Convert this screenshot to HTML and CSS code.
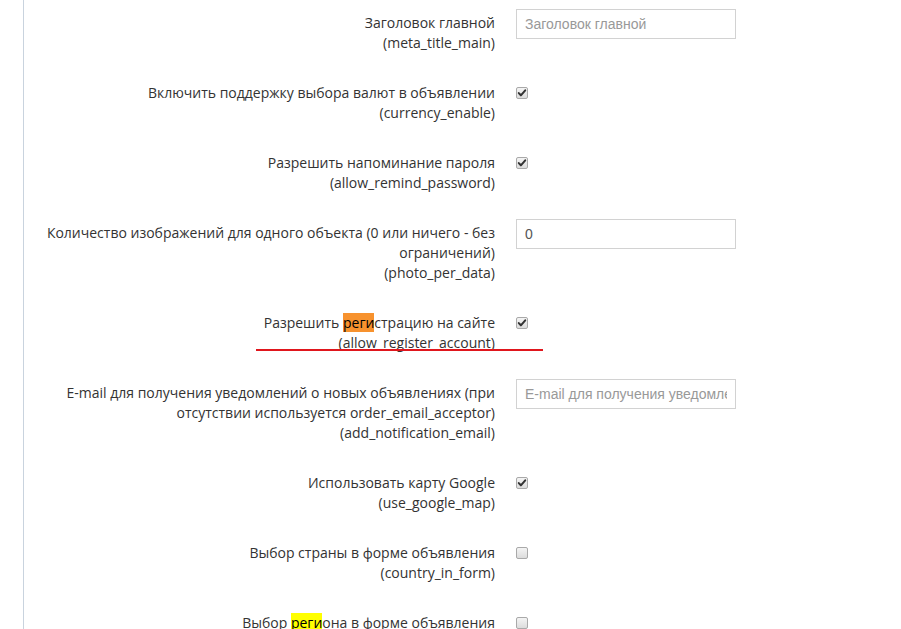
FILE: index.html
```html
<!DOCTYPE html>
<html lang="ru">
<head>
<meta charset="utf-8">
<title>Настройки</title>
<link rel="stylesheet" href="styles.css">
</head>
<body>
<div class="page">
  <form class="settings">
    <div class="row">
      <div class="label">Заголовок главной<br>(meta_title_main)</div>
      <div class="control"><input class="field" type="text" placeholder="Заголовок главной"></div>
    </div>
    <div class="row">
      <div class="label">Включить поддержку выбора валют в объявлении<br>(currency_enable)</div>
      <div class="control"><span class="check on"><svg viewBox="0 0 13 13"><path d="M3 6.6 L5.3 9 L10 3.6" fill="none" stroke="#333" stroke-width="2.2" stroke-linecap="round" stroke-linejoin="round"/></svg></span></div>
    </div>
    <div class="row">
      <div class="label">Разрешить напоминание пароля<br>(allow_remind_password)</div>
      <div class="control"><span class="check on"><svg viewBox="0 0 13 13"><path d="M3 6.6 L5.3 9 L10 3.6" fill="none" stroke="#333" stroke-width="2.2" stroke-linecap="round" stroke-linejoin="round"/></svg></span></div>
    </div>
    <div class="row">
      <div class="label">Количество изображений для одного объекта (0 или ничего - без ограничений)<br>(photo_per_data)</div>
      <div class="control"><input class="field value" type="text" value="0"></div>
    </div>
    <div class="row">
      <div class="label">Разрешить <mark class="hl-orange">реги</mark>страцию на сайте<br>(allow_register_account)</div>
      <div class="control"><span class="check on"><svg viewBox="0 0 13 13"><path d="M3 6.6 L5.3 9 L10 3.6" fill="none" stroke="#333" stroke-width="2.2" stroke-linecap="round" stroke-linejoin="round"/></svg></span></div>
    </div>
    <div class="row">
      <div class="label">E-mail для получения уведомлений о новых объявлениях (при отсутствии используется order_email_acceptor)<br>(add_notification_email)</div>
      <div class="control"><input class="field" type="text" placeholder="E-mail для получения уведомлений о новых объявлениях"></div>
    </div>
    <div class="row">
      <div class="label">Использовать карту Google<br>(use_google_map)</div>
      <div class="control"><span class="check on"><svg viewBox="0 0 13 13"><path d="M3 6.6 L5.3 9 L10 3.6" fill="none" stroke="#333" stroke-width="2.2" stroke-linecap="round" stroke-linejoin="round"/></svg></span></div>
    </div>
    <div class="row">
      <div class="label">Выбор страны в форме объявления<br>(country_in_form)</div>
      <div class="control"><span class="check"></span></div>
    </div>
    <div class="row">
      <div class="label">Выбор <mark class="hl-yellow">реги</mark>она в форме объявления<br>(region_in_form)</div>
      <div class="control"><span class="check"></span></div>
    </div>
  </form>
  <div class="annot-line"></div>
</div>
</body>
</html>
```

FILE: styles.css
```css
html, body {
  margin: 0;
  padding: 0;
  background: #fff;
  height: 100%;
  overflow: hidden;
}

.page {
  position: relative;
  margin-left: 23px;
  border-left: 1px solid #c9d3de;
  min-height: 100%;
  font-family: "Open Sans", "DejaVu Sans", sans-serif;
  font-size: 14px;
  line-height: 20px;
  color: #333;
}

.settings {
  padding-top: 9px;
}

.row {
  display: flex;
  align-items: flex-start;
  margin-bottom: 26px;
}

.label {
  box-sizing: border-box;
  margin-left: 16px;
  width: 455px;
  padding-top: 4px;
  text-align: right;
}

.control {
  margin-left: 21px;
  width: 220px;
}

.field {
  display: block;
  box-sizing: border-box;
  width: 220px;
  height: 30px;
  margin: 0;
  padding: 0 8px;
  border: 1px solid #d2d2d2;
  border-radius: 0;
  background: #fff;
  font-family: "Liberation Sans", Arial, sans-serif;
  font-size: 14px;
  color: #555;
  outline: none;
}

.field::placeholder {
  color: #999;
}

.check {
  display: block;
  box-sizing: border-box;
  width: 12px;
  height: 12px;
  margin-top: 8px;
  border: 1px solid #a9a9a9;
  border-radius: 2px;
  background: linear-gradient(#f4f4f4, #dcdcdc);
}

.check svg {
  display: block;
  width: 12px;
  height: 12px;
  margin: -1px 0 0 -1px;
}

mark {
  color: #000;
  padding: 0;
}

.hl-orange {
  background: #f7922e;
}

.hl-yellow {
  background: #ffff00;
}

.annot-line {
  position: absolute;
  left: 232px;
  top: 349px;
  width: 287px;
  height: 2px;
  background: #e0161d;
}
```
